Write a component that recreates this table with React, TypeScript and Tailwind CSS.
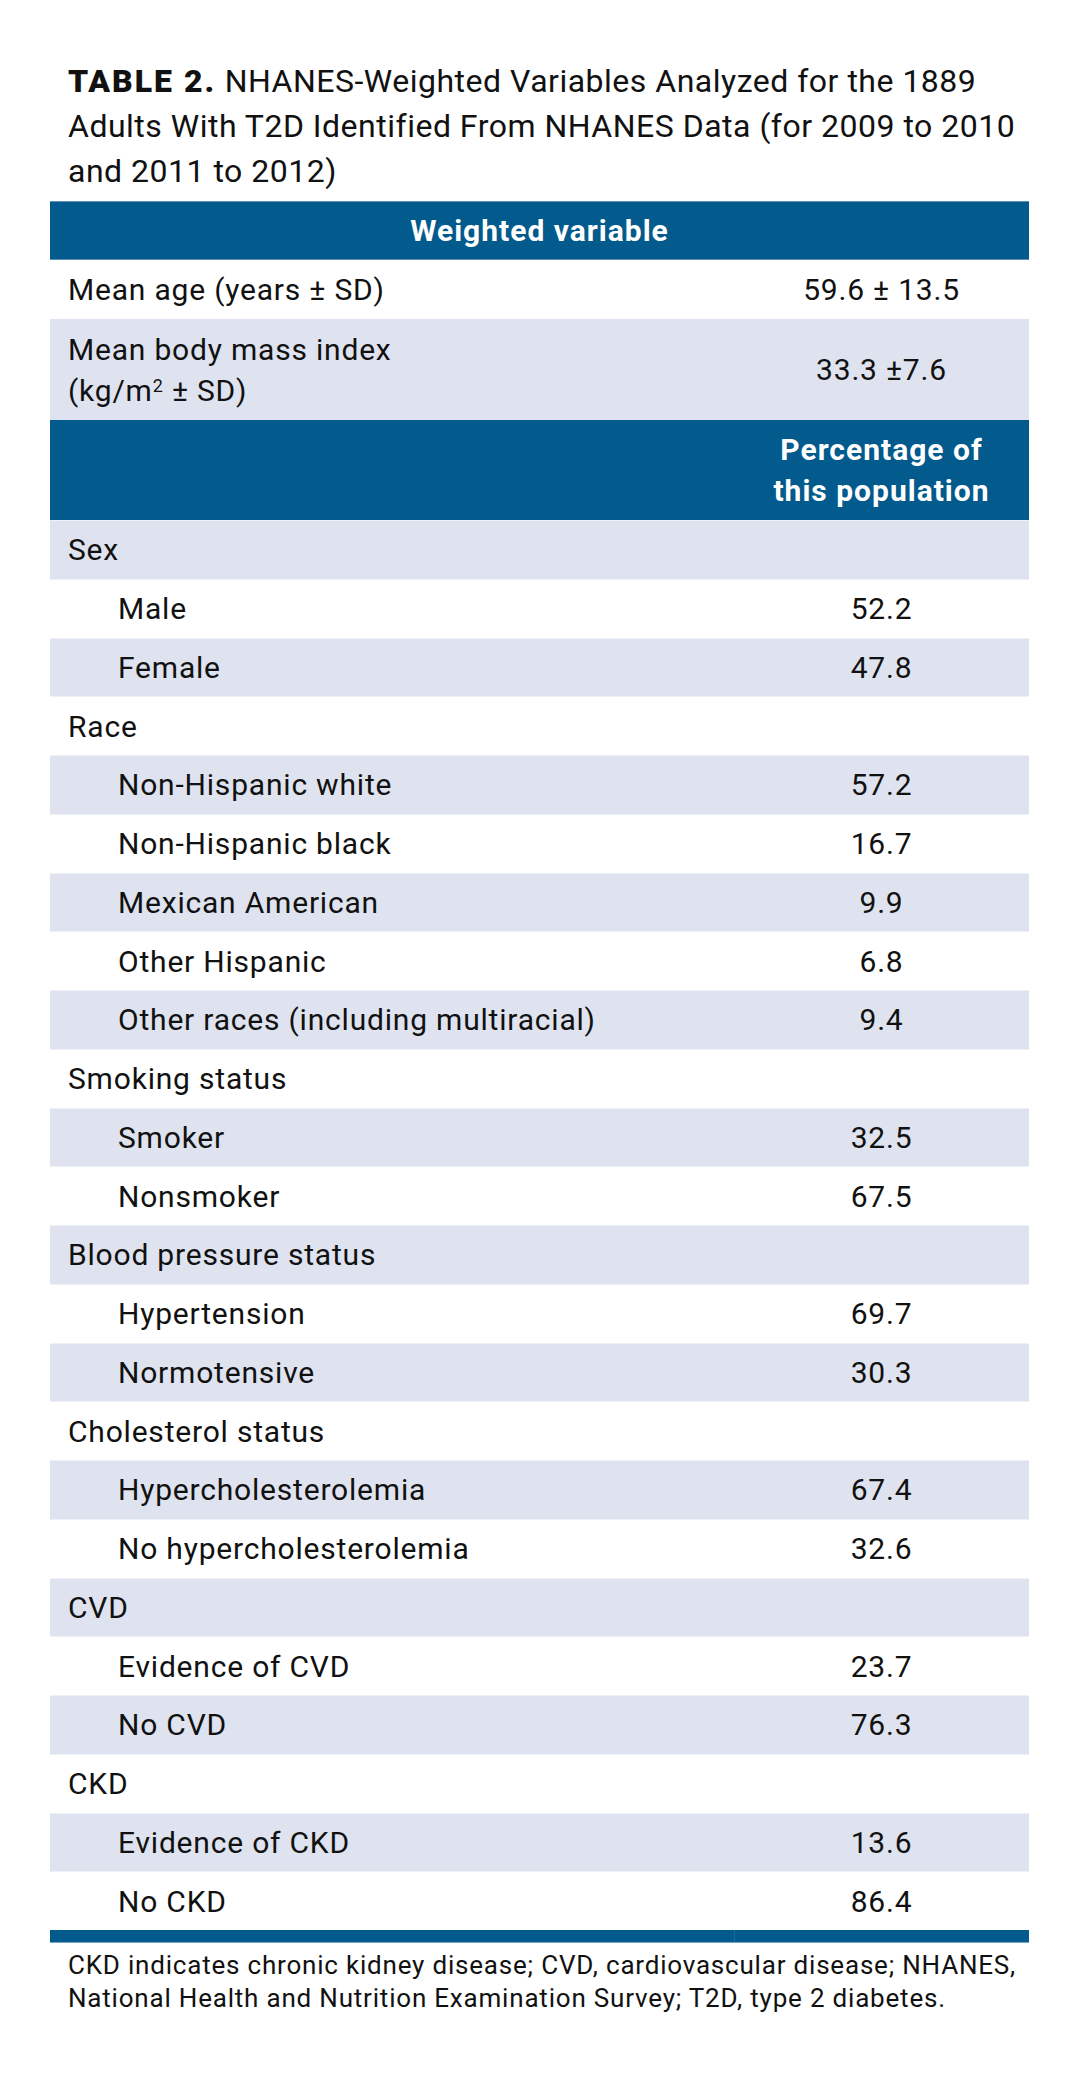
const rows: { label: string; value?: string; indent?: boolean }[] = [
  { label: "Sex" },
  { label: "Male", value: "52.2", indent: true },
  { label: "Female", value: "47.8", indent: true },
  { label: "Race" },
  { label: "Non-Hispanic white", value: "57.2", indent: true },
  { label: "Non-Hispanic black", value: "16.7", indent: true },
  { label: "Mexican American", value: "9.9", indent: true },
  { label: "Other Hispanic", value: "6.8", indent: true },
  { label: "Other races (including multiracial)", value: "9.4", indent: true },
  { label: "Smoking status" },
  { label: "Smoker", value: "32.5", indent: true },
  { label: "Nonsmoker", value: "67.5", indent: true },
  { label: "Blood pressure status" },
  { label: "Hypertension", value: "69.7", indent: true },
  { label: "Normotensive", value: "30.3", indent: true },
  { label: "Cholesterol status" },
  { label: "Hypercholesterolemia", value: "67.4", indent: true },
  { label: "No hypercholesterolemia", value: "32.6", indent: true },
  { label: "CVD" },
  { label: "Evidence of CVD", value: "23.7", indent: true },
  { label: "No CVD", value: "76.3", indent: true },
  { label: "CKD" },
  { label: "Evidence of CKD", value: "13.6", indent: true },
  { label: "No CKD", value: "86.4", indent: true },
]

const font = { fontFamily: "Roboto, 'Liberation Sans', sans-serif" }

export default function App() {
  return (
    <div className="w-[1080px] min-h-[2075px] bg-white text-[#111] pt-[59px]" style={font}>
      <h1 className="px-[68px] text-[32px] leading-[45px] tracking-[0.5px] font-normal">
        <div className="whitespace-nowrap">
          <span className="font-black tracking-[2px]">TABLE 2.</span> NHANES-Weighted Variables Analyzed for the 1889
        </div>
        <div className="whitespace-nowrap">Adults With T2D Identified From NHANES Data (for 2009 to 2010</div>
        <div className="whitespace-nowrap">and 2011 to 2012)</div>
      </h1>

      <div className="mt-[7px] mx-[50px] w-[979px] text-[30px] tracking-[0.8px]">
        <div className="h-[59px] bg-[#035a8c] border-y border-[#5d8fba] flex items-center justify-center text-white font-bold tracking-[1px]">
          Weighted variable
        </div>
        <div className="h-[59px] grid grid-cols-[684px_295px] items-center bg-white">
          <div className="pl-[18px]">Mean age (years ± SD)</div>
          <div className="text-center">59.6 ± 13.5</div>
        </div>
        <div className="h-[101px] grid grid-cols-[684px_295px] items-center bg-[#dee3ef] leading-[41px]">
          <div className="pl-[18px]">
            Mean body mass index
            <br />
            (kg/m<sup className="text-[18px]">2</sup> ± SD)
          </div>
          <div className="text-center">33.3 ±7.6</div>
        </div>
        <div className="h-[100px] grid grid-cols-[684px_295px] items-center bg-[#035a8c] text-white font-bold leading-[41px] tracking-[1px]">
          <div />
          <div className="text-center">
            Percentage of
            <br />
            this population
          </div>
        </div>
        {rows.map((r, i) => (
          <div
            key={r.label}
            className={`h-[58.75px] grid grid-cols-[684px_295px] items-center border-t border-[#eef1f7] ${
              i % 2 === 0 ? "bg-[#dee3ef]" : "bg-white"
            }`}
          >
            <div className={r.indent ? "pl-[68px]" : "pl-[18px]"}>{r.label}</div>
            <div className="text-center">{r.value}</div>
          </div>
        ))}
        <div className="h-[12px] grid grid-cols-[684px_295px] bg-[#035a8c]">
          <div />
          <div className="border-l border-[#1d6a98]" />
        </div>
        <div className="h-px bg-[#7aa3c6]" />
      </div>

      <div className="mt-[6px] px-[68px] text-[26px] leading-[33px] tracking-[0.8px] text-[#111]">
        <div className="whitespace-nowrap">
          CKD indicates chronic kidney disease; CVD, cardiovascular disease; NHANES,
        </div>
        <div className="whitespace-nowrap">
          National Health and Nutrition Examination Survey; T2D, type 2 diabetes.
        </div>
      </div>
    </div>
  )
}
